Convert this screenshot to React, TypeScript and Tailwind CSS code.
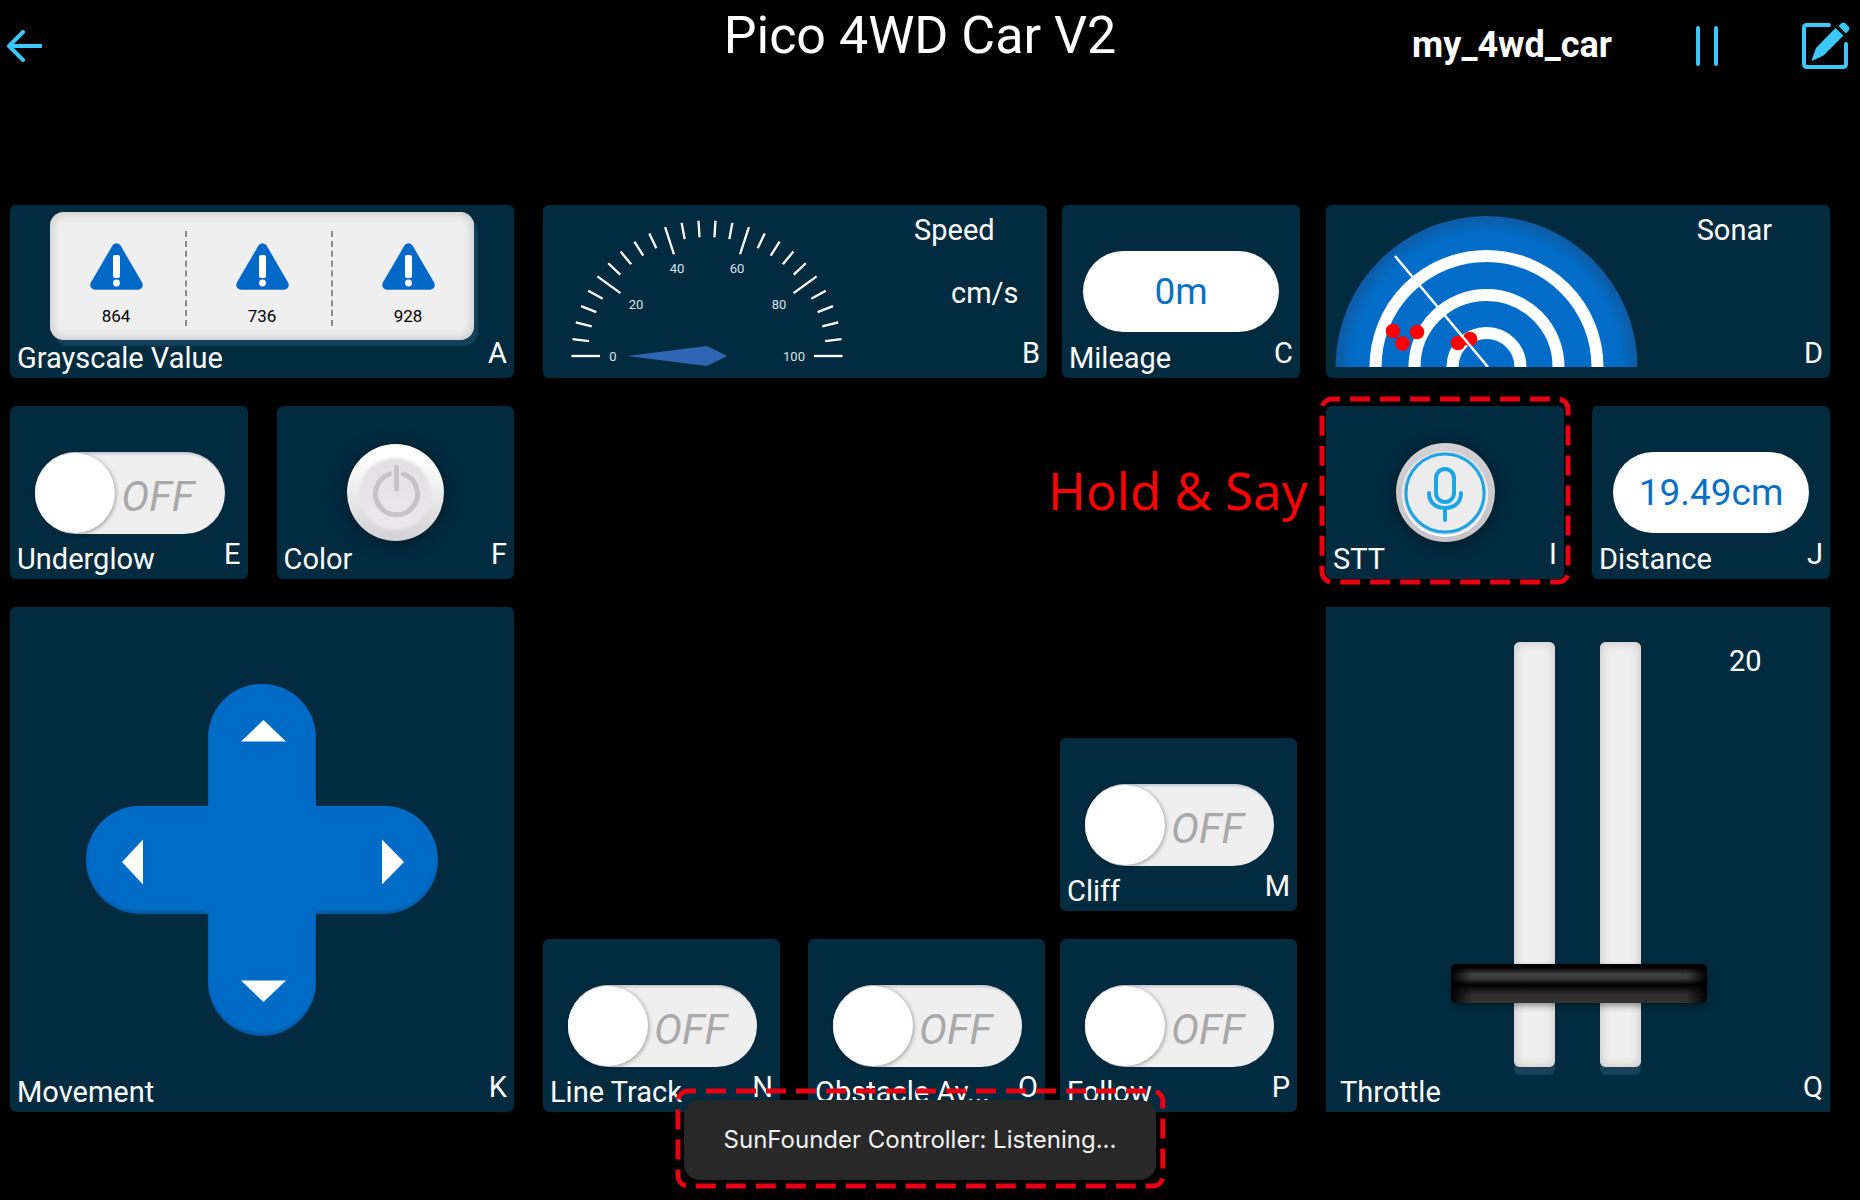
import { useState, type ReactNode } from 'react';

type TileProps = {
  letter: string;
  label?: string;
  className?: string;
  labelClass?: string;
  children: ReactNode;
};

function Tile({ letter, label, className = 'min-h-[173px] rounded-md', labelClass = 'pl-[7px]', children }: TileProps) {
  return (
    <section className={`relative flex min-w-0 flex-1 flex-col bg-[#022b40] ${className}`}>
      <div className="flex min-h-0 flex-1 flex-col">{children}</div>
      {label && <h2 className={`pb-1 text-[29px] leading-8 whitespace-nowrap ${labelClass}`}>{label}</h2>}
      <span className="absolute right-[7px] bottom-[9px] text-[29px] leading-8">{letter}</span>
    </section>
  );
}

function Toggle({ name }: { name: string }) {
  const [on, setOn] = useState(false);
  return (
    <label className="relative mr-[23px] ml-[25px] mt-[46px] flex h-[82px] cursor-pointer items-center rounded-full bg-[#efefef] shadow-[inset_1px_2px_2px_#c3c8d2]">
      <input type="checkbox" className="sr-only" aria-label={name} checked={on} onChange={() => setOn(!on)} />
      <span className={`size-20 shrink-0 rounded-full bg-white shadow-[1px_1px_4px_rgba(0,0,0,0.35)] ${on ? 'order-2' : ''}`} />
      <span className="flex-1 pt-2 pr-6 text-center text-[42px] leading-[48px] text-[#a9a9a9] italic">{on ? 'ON' : 'OFF'}</span>
    </label>
  );
}

function Pill({ children }: { children: ReactNode }) {
  return (
    <div className="mx-[21px] mt-[46px] flex h-[81px] items-center justify-center rounded-full bg-white text-[37px] leading-10 text-[#0a70c4]">
      {children}
    </div>
  );
}

function DashedFrame({ className, offset }: { className: string; offset: number }) {
  return (
    <div className={`pointer-events-none absolute ${className}`}>
      <svg className="block size-full overflow-visible" aria-hidden="true">
        <rect width="100%" height="100%" rx="10" fill="none" stroke="#e60012" strokeWidth="5" strokeDasharray="20 10" strokeDashoffset={offset} />
      </svg>
    </div>
  );
}

function Warning() {
  return (
    <svg className="h-[47px] w-[53px]" viewBox="0 0 53 47" aria-hidden="true">
      <path d="M26.500 5 L48 42 H5 Z" fill="#0069c8" stroke="#0069c8" strokeWidth="9.500" strokeLinejoin="round" />
      <rect x="23" y="12" width="7" height="23" rx="2" fill="#fff" />
      <circle cx="26.500" cy="40" r="3.400" fill="#fff" />
    </svg>
  );
}

function Grayscale() {
  return (
    <div className="mx-10 mt-[7px] h-32 rounded-[14px] bg-[#efefef] pt-[19px] shadow-[inset_0_0_8px_2px_#c9c7cb,4px_6px_2px_#14405a]">
      <div className="-mx-[7px] grid h-[92px] grid-cols-3">
        {['864', '736', '928'].map((value, i) => (
          <div key={value} className="relative flex flex-col items-center pt-3">
            <Warning />
            <span className="mt-4 text-[17px] leading-5 text-black">{value}</span>
            {i < 2 && <span className="absolute inset-y-0 right-0.5 border-r-2 border-dashed border-[#8c8c8c]" />}
          </div>
        ))}
      </div>
    </div>
  );
}

const gaugeLabels = [
  { t: '0', x: 46, y: 139 },
  { t: '20', x: 69, y: 87 },
  { t: '40', x: 110, y: 51 },
  { t: '60', x: 170, y: 51 },
  { t: '80', x: 212, y: 87 },
  { t: '100', x: 227, y: 139 },
];

function Gauge() {
  return (
    <svg className="mt-2 ml-6 h-[156px] w-[280px] shrink-0" viewBox="0 0 280 156" role="img" aria-label="Speed gauge">
      {Array.from({ length: 26 }, (_, i) => (
        <line
          key={i}
          x1="4.500"
          y1="143"
          x2={i % 5 === 0 ? 33 : 21}
          y2="143"
          stroke="#fff"
          strokeWidth="2.300"
          transform={`rotate(${i * 7.2} 140 143)`}
        />
      ))}
      {gaugeLabels.map((l) => (
        <text key={l.t} x={l.x} y={l.y + 9} textAnchor="middle" fontSize="13" fill="#d9e4ec">
          {l.t}
        </text>
      ))}
      <path d="M60 143 L140 133 L160 143 L140 153 Z" fill="#2f66b3" />
    </svg>
  );
}

function Sonar() {
  return (
    <svg className="mt-[11px] ml-[9px] h-[151px] w-[303px] shrink-0" viewBox="0 0 303 151" role="img" aria-label="Sonar">
      <defs>
        <radialGradient id="dome" gradientUnits="userSpaceOnUse" cx="151.500" cy="151" r="151.500">
          <stop offset="0.88" stopColor="#016dc8" />
          <stop offset="1" stopColor="#0f5aa2" />
        </radialGradient>
      </defs>
      <circle cx="151.500" cy="151" r="151" fill="url(#dome)" />
      <g fill="none" stroke="#fff" strokeWidth="12">
        <circle cx="151.500" cy="151" r="111" />
        <circle cx="151.500" cy="151" r="72" />
        <circle cx="151.500" cy="151" r="34" />
      </g>
      <g fill="#f00">
        <circle cx="58" cy="115" r="7.300" />
        <circle cx="67.500" cy="127.500" r="7.300" />
        <circle cx="82" cy="116" r="7.300" />
        <circle cx="123" cy="127" r="7.300" />
        <circle cx="135" cy="123" r="7.300" />
      </g>
      <path d="M60 40 L153 151" stroke="#fff" strokeWidth="2.500" />
    </svg>
  );
}

function PowerButton() {
  return (
    <button
      aria-label="Color"
      className="mx-auto mt-[38px] flex size-[97px] items-center justify-center rounded-full bg-linear-to-b from-white from-15% to-[#d3d1d3] shadow-[0_2px_14px_4px_#01202f]"
    >
      <svg className="size-20" viewBox="0 0 80 80" fill="none" aria-hidden="true">
        <defs>
          <linearGradient id="face" x1="0" y1="0" x2="0" y2="1">
            <stop offset="0" stopColor="#e2e0e2" />
            <stop offset="1" stopColor="#ebe9eb" />
          </linearGradient>
          <filter id="soft">
            <feGaussianBlur stdDeviation="1.500" />
          </filter>
        </defs>
        <circle cx="40" cy="41" r="36" fill="url(#face)" filter="url(#soft)" />
        <g stroke="#c6c4c6" strokeWidth="5" strokeLinecap="round">
          <path d="M34.500 21 A21 21 0 1 0 48.500 21" />
          <path d="M41.500 14 V36" />
        </g>
      </svg>
    </button>
  );
}

function MicButton() {
  return (
    <button
      aria-label="STT"
      className="mx-auto mt-[37px] flex size-[99px] items-center justify-center rounded-full bg-linear-to-b from-[#d2d0d2] to-[#c6c4c6] shadow-[0_2px_12px_4px_#01202f]"
    >
      <svg className="size-[90px]" viewBox="0 0 90 90" fill="none" aria-hidden="true">
        <circle cx="45" cy="46" r="43" fill="#fbfbfb" />
        <circle cx="45" cy="45" r="42" fill="#dcdadc" />
        <circle cx="45" cy="45" r="39" fill="#ececec" stroke="#1ba5e3" strokeWidth="3" />
        <g stroke="#1ba5e3" strokeWidth="4" strokeLinecap="round">
          <rect x="36" y="21" width="18" height="33" rx="9" />
          <path d="M29 45 C29 54.500 35.500 60 45 60 C54.500 60 61 54.500 61 45" />
          <path d="M45 60 V72" />
        </g>
      </svg>
    </button>
  );
}

function Pad() {
  const cross =
    'M122 54 A54 54 0 0 1 230 54 V122 H298 A54 54 0 0 1 298 230 H230 V298 A54 54 0 0 1 122 298 V230 H54 A54 54 0 0 1 54 122 H122 Z';
  return (
    <div className="relative size-[352px]">
      <svg className="absolute inset-0 size-full" viewBox="0 0 352 352" aria-hidden="true">
        <defs>
          <clipPath id="cross">
            <path d={cross} />
          </clipPath>
          <filter id="edge" x="-10%" y="-10%" width="120%" height="120%">
            <feGaussianBlur stdDeviation="2" />
          </filter>
        </defs>
        <path d={cross} fill="#0a4e92" />
        <g clipPath="url(#cross)">
          <path d={cross} fill="#016cc6" stroke="#016cc6" strokeWidth="2" filter="url(#edge)" transform="translate(0 -3)" />
        </g>
        <g fill="#fff">
          <path d="M177.500 36 L200 57.500 H155 Z" />
          <path d="M177.500 318 L155 296.500 H200 Z" />
          <path d="M36 178 L57 155.500 V200.500 Z" />
          <path d="M318 178 L296 155.500 V200.500 Z" />
        </g>
      </svg>
      <div className="relative grid size-full grid-cols-3 grid-rows-3">
        <button aria-label="Up" className="col-start-2 row-start-1" />
        <button aria-label="Left" className="col-start-1 row-start-2" />
        <button aria-label="Right" className="col-start-3 row-start-2" />
        <button aria-label="Down" className="col-start-2 row-start-3" />
      </div>
    </div>
  );
}

function Throttle() {
  const [value, setValue] = useState(20);
  const track = 'h-full w-[41px] rounded-md bg-[#efefef] shadow-[inset_0_0_9px_2px_#cfccce,0_8px_1px_#194258]';
  return (
    <div className="flex h-full items-start pt-[35px]">
      <div className="relative ml-[125px] flex h-[425px] w-[256px] justify-center gap-[45px] pr-1">
        <div className={track} />
        <div className={track} />
        <div
          className="pointer-events-none absolute inset-x-0 h-[39px] rounded-md shadow-[0_3px_6px_rgba(0,0,0,0.4)]"
          style={{ bottom: `${((value + 1) * 64) / 21}px` }}
        >
          <svg className="size-full" viewBox="0 0 256 39" preserveAspectRatio="none" aria-hidden="true">
            <defs>
              <linearGradient id="bar" x1="0" y1="0" x2="0" y2="1">
                <stop offset="0.080" stopColor="#000" />
                <stop offset="0.270" stopColor="#424242" />
                <stop offset="0.380" stopColor="#383838" />
                <stop offset="0.530" stopColor="#000" />
                <stop offset="0.780" stopColor="#2d2b2c" />
                <stop offset="1" stopColor="#333132" />
              </linearGradient>
              <linearGradient id="ends">
                <stop offset="0" stopColor="#000" />
                <stop offset="0.080" stopColor="#000" stopOpacity="0" />
                <stop offset="0.920" stopColor="#000" stopOpacity="0" />
                <stop offset="1" stopColor="#000" />
              </linearGradient>
            </defs>
            <rect width="256" height="39" rx="5" fill="url(#bar)" />
            <rect width="256" height="39" rx="5" fill="url(#ends)" />
          </svg>
        </div>
        <input
          type="range"
          aria-label="Throttle"
          min={0}
          max={100}
          value={value}
          onChange={(e) => setValue(Number(e.target.value))}
          className="absolute inset-0 size-full opacity-0 [direction:rtl] [writing-mode:vertical-lr]"
        />
      </div>
      <output className="ml-[22px] pt-[3px] text-[29px] leading-8">{value}</output>
    </div>
  );
}

export default function App() {
  return (
    <div className="relative min-h-screen bg-black pb-[88px] font-['Roboto',sans-serif] text-white">
      <header className="grid h-[92px] grid-cols-[1fr_auto_1fr] items-center pr-[10px] pl-1.5">
        <button aria-label="Back" className="justify-self-start">
          <svg className="h-8 w-9" viewBox="0 0 36 32" fill="none" stroke="#3dc8fa" strokeWidth="4" strokeLinecap="round" strokeLinejoin="round" aria-hidden="true">
            <path d="M17 2 L3 16 L17 30" />
            <path d="M4 16 H35" />
          </svg>
        </button>
        <h1 className="self-start pt-1.5 pr-4 text-[52px] leading-[60px]">Pico 4WD Car V2</h1>
        <div className="flex items-center gap-[84px] justify-self-end">
          <span className="pb-0.5 text-[36px] leading-10 font-bold">my_4wd_car</span>
          <button aria-label="Pause">
            <svg className="h-10 w-[22px]" viewBox="0 0 22 40" stroke="#3dc8fa" strokeWidth="4" strokeLinecap="round" aria-hidden="true">
              <path d="M2 2 V38 M20 2 V38" />
            </svg>
          </button>
          <button aria-label="Edit">
            <svg className="size-12" viewBox="0 0 48 48" fill="none" aria-hidden="true">
              <path d="M27 3 H5 Q2 3 2 6 V42 Q2 45 5 45 H41 Q44 45 44 42 V22" stroke="#3dc8fa" strokeWidth="4" strokeLinecap="round" />
              <path d="M33.500 6 L41.500 13.500 L21.500 33.500 L11 38.500 Q9.500 39 10 37 L14 26 Z" fill="#3dc8fa" />
              <path d="M36.500 4 L40 0.800 Q41.500 0 43 1 L47 5 Q48 6.500 47 8 L44 11.500 Z" fill="#3dc8fa" />
            </svg>
          </button>
        </div>
      </header>

      <main className="mt-[113px] flex pr-[30px] pl-[10px]">
        <div className="flex min-w-0 flex-[504] flex-col gap-7">
          <Tile letter="A" label="Grayscale Value">
            <Grayscale />
          </Tile>
          <div className="flex gap-[29px]">
            <Tile letter="E" label="Underglow">
              <Toggle name="Underglow" />
            </Tile>
            <Tile letter="F" label="Color">
              <PowerButton />
            </Tile>
          </div>
          <Tile letter="K" label="Movement" className="min-h-[505px] rounded-md">
            <div className="flex flex-1 items-center justify-center pt-9">
              <Pad />
            </div>
          </Tile>
        </div>

        <div className="mr-[26px] ml-[29px] flex min-w-0 flex-[757] flex-col justify-between">
          <div className="flex gap-[15px]">
            <div className="flex min-w-0 flex-[504]">
              <Tile letter="B">
                <div className="flex">
                  <Gauge />
                  <div className="ml-[67px] text-[29px] leading-8">
                    <h2 className="pt-[9px]">Speed</h2>
                    <p className="pt-[31px] pl-[37px]">cm/s</p>
                  </div>
                </div>
              </Tile>
            </div>
            <div className="flex min-w-0 flex-[238]">
              <Tile letter="C" label="Mileage">
                <Pill>0m</Pill>
              </Tile>
            </div>
          </div>
          <div className="grid grid-cols-[237fr_28px_237fr_15px_237fr] gap-y-7 pr-[3px]">
            <div className="col-start-5 flex min-w-0">
              <Tile letter="M" label="Cliff">
                <Toggle name="Cliff" />
              </Tile>
            </div>
            <div className="col-start-1 flex min-w-0">
              <Tile letter="N" label="Line Track">
                <Toggle name="Line Track" />
              </Tile>
            </div>
            <div className="col-start-3 flex min-w-0">
              <Tile letter="O" label="Obstacle Av...">
                <Toggle name="Obstacle Avoidance" />
              </Tile>
            </div>
            <div className="col-start-5 flex min-w-0">
              <Tile letter="P" label="Follow">
                <Toggle name="Follow" />
              </Tile>
            </div>
          </div>
        </div>

        <div className="flex min-w-0 flex-[504] flex-col gap-7">
          <Tile letter="D">
            <div className="flex justify-between">
              <Sonar />
              <h2 className="pt-[9px] pr-[58px] text-[29px] leading-8">Sonar</h2>
            </div>
          </Tile>
          <div className="flex gap-7">
            <div className="relative flex min-w-0 flex-1">
              <Tile letter="I" label="STT">
                <MicButton />
              </Tile>
              <DashedFrame className="-inset-x-1 -top-[7px] -bottom-[3px]" offset={12} />
              <p className="absolute top-12 right-full mr-[18px] font-['Noto_Sans',sans-serif] text-[51px] leading-[72px] whitespace-nowrap text-[#f00]">
                Hold &amp; Say
              </p>
            </div>
            <Tile letter="J" label="Distance">
              <Pill>19.49cm</Pill>
            </Tile>
          </div>
          <Tile letter="Q" label="Throttle" className="min-h-[505px]" labelClass="pl-3.5">
            <Throttle />
          </Tile>
        </div>
      </main>

      <div className="pointer-events-none absolute inset-x-0 bottom-5 flex justify-center pr-[30px] pl-[10px]">
        <div className="relative">
          <p
            role="status"
            className="rounded-2xl bg-[#282828] px-10 py-6 font-['Inter',sans-serif] text-[24px] leading-8 whitespace-nowrap text-[#f2f2f2]"
          >
            SunFounder Controller: Listening...
          </p>
          <DashedFrame className="-inset-x-1.5 -top-[9px] -bottom-[6px]" offset={12} />
        </div>
      </div>
    </div>
  );
}
